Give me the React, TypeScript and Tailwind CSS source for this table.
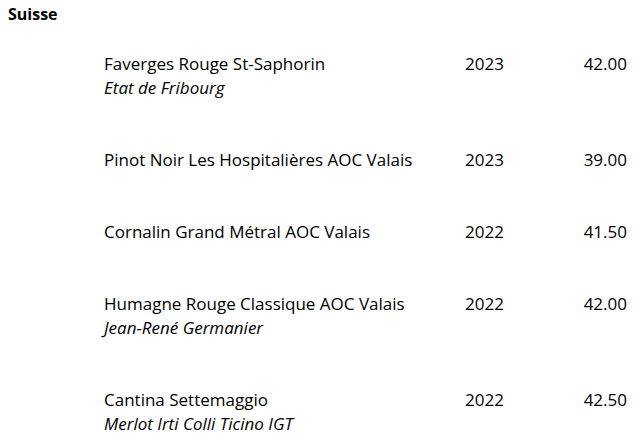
import React from "react";

type Wine = { name: string; sub?: string; year: string; price: string };

const wines: Wine[] = [
  { name: "Faverges Rouge St-Saphorin", sub: "Etat de Fribourg", year: "2023", price: "42.00" },
  { name: "Pinot Noir Les Hospitalières AOC Valais", year: "2023", price: "39.00" },
  { name: "Cornalin Grand Métral AOC Valais", year: "2022", price: "41.50" },
  { name: "Humagne Rouge Classique AOC Valais", sub: "Jean-René Germanier", year: "2022", price: "42.00" },
  { name: "Cantina Settemaggio", sub: "Merlot Irti Colli Ticino IGT", year: "2022", price: "42.50" },
];

export default function App() {
  return (
    <div className="h-[444px] overflow-hidden bg-white text-black font-['Open_Sans',sans-serif]">
      <h2 className="px-2 pt-[2px] text-[16px] leading-6 font-bold">Suisse</h2>
      <div className="mt-[26px] ml-[104px] w-[523px] flex flex-col gap-12">
        {wines.map((w) => (
          <div key={w.name} className="flex text-[17px] leading-6">
            <div className="w-[361px] flex flex-col">
              <span>{w.name}</span>
              {w.sub && <span className="italic">{w.sub}</span>}
            </div>
            <div className="flex-1">{w.year}</div>
            <div className="text-right">{w.price}</div>
          </div>
        ))}
      </div>
    </div>
  );
}
